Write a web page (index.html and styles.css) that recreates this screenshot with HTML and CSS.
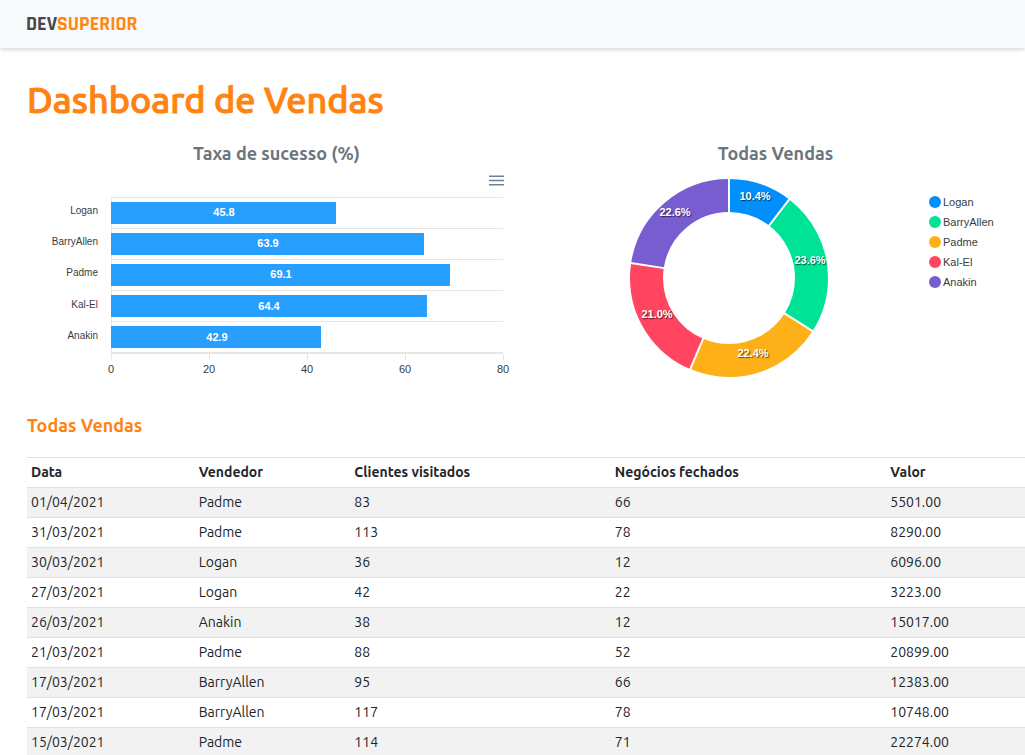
FILE: index.html
```html
<!DOCTYPE html>
<html lang="pt-BR">
<head>
<meta charset="utf-8">
<meta name="viewport" content="width=device-width, initial-scale=1">
<title>Dashboard de Vendas</title>
<link rel="stylesheet" href="styles.css">
</head>
<body>
<header class="navbar">
  <a class="brand" href="#">DEV<span class="brand-accent">SUPERIOR</span></a>
</header>
<main class="container">
  <h1 class="page-title">Dashboard de Vendas</h1>
  <div class="charts">
    <section class="chart">
      <h2 class="chart-title">Taxa de sucesso (%)</h2>
      <div class="toolbar">
        <button class="menu-button" type="button" aria-label="Menu">
          <svg class="menu-icon" viewBox="0 0 15 11" aria-hidden="true"><path d="M0 1.2h15M0 5.5h15M0 9.8h15"/></svg>
        </button>
      </div>
      <svg class="bar-chart" viewBox="0 0 499 194" role="img" aria-label="Taxa de sucesso">
        <g class="grid">
          <path d="M84 10.5h392M84 41.5h392M84 72.5h392M84 103.5h392M84 134.5h392"/>
          <path d="M84.5 10v162M182.5 167v6M280.5 167v6M378.5 167v6M476.5 167v6"/>
          <path class="axis" d="M84 166h392"/>
        </g>
        <g class="bars">
          <rect x="84" y="15" width="225" height="22"/>
          <rect x="84" y="46" width="313" height="22"/>
          <rect x="84" y="77" width="339" height="22"/>
          <rect x="84" y="108" width="316" height="22"/>
          <rect x="84" y="139" width="210" height="22"/>
        </g>
        <g class="bar-values">
          <text x="197" y="29">45.8</text>
          <text x="241" y="60">63.9</text>
          <text x="254" y="91">69.1</text>
          <text x="242" y="123">64.4</text>
          <text x="190" y="154">42.9</text>
        </g>
        <g class="bar-names">
          <text x="71" y="27">Logan</text>
          <text x="71" y="58">BarryAllen</text>
          <text x="71" y="89">Padme</text>
          <text x="71" y="121">Kal-El</text>
          <text x="71" y="152">Anakin</text>
        </g>
        <g class="ticks">
          <text x="84" y="186">0</text>
          <text x="182" y="186">20</text>
          <text x="280" y="186">40</text>
          <text x="378" y="186">60</text>
          <text x="476" y="186">80</text>
        </g>
      </svg>
    </section>
    <section class="chart">
      <h2 class="chart-title">Todas Vendas</h2>
      <div class="donut-row">
        <svg class="donut" viewBox="0 0 403 214" role="img" aria-label="Todas Vendas por vendedor">
          <g class="slices" transform="translate(203 111) rotate(-90)">
            <circle class="blue" r="82.5" pathLength="1000" stroke-dasharray="104 896"/>
            <circle class="green" r="82.5" pathLength="1000" stroke-dasharray="236 764" stroke-dashoffset="-104"/>
            <circle class="yellow" r="82.5" pathLength="1000" stroke-dasharray="224 776" stroke-dashoffset="-340"/>
            <circle class="red" r="82.5" pathLength="1000" stroke-dasharray="210 790" stroke-dashoffset="-564"/>
            <circle class="purple" r="82.5" pathLength="1000" stroke-dasharray="226 774" stroke-dashoffset="-774"/>
          </g>
          <g class="dividers" transform="translate(203 111)">
            <path d="M0-64v-37"/>
            <path d="M0-64v-37" transform="rotate(37.44)"/>
            <path d="M0-64v-37" transform="rotate(122.4)"/>
            <path d="M0-64v-37" transform="rotate(203.04)"/>
            <path d="M0-64v-37" transform="rotate(278.64)"/>
          </g>
          <g class="slice-values">
            <text x="229" y="33">10.4%</text>
            <text x="284" y="97">23.6%</text>
            <text x="227" y="190">22.4%</text>
            <text x="131" y="151">21.0%</text>
            <text x="149" y="49">22.6%</text>
          </g>
        </svg>
        <ul class="legend">
          <li class="legend-item"><span class="dot dot-blue"></span>Logan</li>
          <li class="legend-item"><span class="dot dot-green"></span>BarryAllen</li>
          <li class="legend-item"><span class="dot dot-yellow"></span>Padme</li>
          <li class="legend-item"><span class="dot dot-red"></span>Kal-El</li>
          <li class="legend-item"><span class="dot dot-purple"></span>Anakin</li>
        </ul>
      </div>
    </section>
  </div>
  <h2 class="table-title">Todas Vendas</h2>
  <table class="sales">
    <colgroup><col class="col-date"><col class="col-seller"><col class="col-visited"><col class="col-deals"><col></colgroup>
    <thead>
      <tr><th scope="col">Data</th><th scope="col">Vendedor</th><th scope="col">Clientes visitados</th><th scope="col">Negócios fechados</th><th scope="col">Valor</th></tr>
    </thead>
    <tbody>
      <tr><td>01/04/2021</td><td>Padme</td><td>83</td><td>66</td><td>5501.00</td></tr>
      <tr><td>31/03/2021</td><td>Padme</td><td>113</td><td>78</td><td>8290.00</td></tr>
      <tr><td>30/03/2021</td><td>Logan</td><td>36</td><td>12</td><td>6096.00</td></tr>
      <tr><td>27/03/2021</td><td>Logan</td><td>42</td><td>22</td><td>3223.00</td></tr>
      <tr><td>26/03/2021</td><td>Anakin</td><td>38</td><td>12</td><td>15017.00</td></tr>
      <tr><td>21/03/2021</td><td>Padme</td><td>88</td><td>52</td><td>20899.00</td></tr>
      <tr><td>17/03/2021</td><td>BarryAllen</td><td>95</td><td>66</td><td>12383.00</td></tr>
      <tr><td>17/03/2021</td><td>BarryAllen</td><td>117</td><td>78</td><td>10748.00</td></tr>
      <tr><td>15/03/2021</td><td>Padme</td><td>114</td><td>71</td><td>22274.00</td></tr>
    </tbody>
  </table>
</main>
</body>
</html>
```

FILE: styles.css
```css
* {
  box-sizing: border-box;
}

body {
  margin: 0;
  background: #fff;
  color: #212529;
  font-family: Ubuntu, "Noto Sans", sans-serif;
  font-size: 14px;
}

.navbar {
  display: flex;
  align-items: center;
  height: 48px;
  padding: 0 26px;
  background: #f8f9fa;
  box-shadow: 0 2px 4px rgba(0, 0, 0, 0.15);
}

.brand {
  color: #46484c;
  font-family: Rajdhani, Roboto, sans-serif;
  font-size: 20px;
  font-weight: 700;
  line-height: 24px;
  text-decoration: none;
}

.brand-accent {
  color: #ff8812;
}

.container {
  padding: 28px 0 0 27px;
}

.page-title {
  margin: 0 0 17px;
  color: #ff8312;
  font-size: 36px;
  font-weight: 500;
  line-height: 48px;
  -webkit-text-stroke: 1px currentColor;
}

.charts {
  display: grid;
  grid-template-columns: 1fr 1fr;
}

.chart-title {
  margin: 0;
  color: #6c757d;
  font-size: 18px;
  font-weight: 700;
  line-height: 24px;
  text-align: center;
}

.toolbar {
  display: flex;
  justify-content: flex-end;
  padding: 8px 22px 0 0;
}

.menu-button {
  display: flex;
  align-items: center;
  height: 14px;
  padding: 0;
  border: 0;
  background: none;
  cursor: pointer;
}

.menu-icon {
  width: 15px;
  height: 11px;
  stroke: #6e8192;
  stroke-width: 1.4;
}

.bar-chart {
  display: block;
  width: 100%;
  font-family: "Liberation Sans", sans-serif;
}

.grid {
  fill: none;
  stroke: #e6e6e6;
}

.axis {
  stroke-width: 2;
}

.bars {
  fill: #279fff;
}

.bar-values {
  fill: #fff;
  font-size: 11px;
  font-weight: 700;
  text-anchor: middle;
}

.bar-names {
  fill: #373d3f;
  font-size: 10px;
  text-anchor: end;
}

.ticks {
  fill: #373d3f;
  font-size: 11px;
  text-anchor: middle;
}

.donut-row {
  display: flex;
  align-items: flex-start;
  padding-top: 2px;
  font-family: "Liberation Sans", sans-serif;
}

.donut {
  flex: 403 1 0;
  min-width: 0;
}

.slices {
  fill: none;
  stroke-width: 33;
}

.blue {
  stroke: #008ffb;
}

.green {
  stroke: #00e396;
}

.yellow {
  stroke: #feb019;
}

.red {
  stroke: #ff4560;
}

.purple {
  stroke: #775dd0;
}

.dividers {
  stroke: #fff;
  stroke-width: 2;
}

.slice-values {
  fill: #fff;
  font-size: 11px;
  font-weight: 700;
  text-anchor: middle;
  text-shadow: 1px 1px 1px rgba(0, 0, 0, 0.6);
}

.legend {
  flex: 96 0 0;
  margin: 0;
  padding: 25px 0 0;
  color: #373d3f;
  font-size: 11px;
  line-height: 20px;
  list-style: none;
}

.legend-item {
  display: flex;
  align-items: center;
  gap: 2px;
}

.dot {
  width: 12px;
  height: 12px;
  border-radius: 50%;
}

.dot-blue {
  background: #008ffb;
}

.dot-green {
  background: #00e396;
}

.dot-yellow {
  background: #feb019;
}

.dot-red {
  background: #ff4560;
}

.dot-purple {
  background: #775dd0;
}

.table-title {
  margin: 32px 0 20px;
  color: #ff8312;
  font-size: 18px;
  font-weight: 700;
  line-height: 24px;
}

.sales {
  width: 100%;
  border-collapse: collapse;
  table-layout: fixed;
}

.col-date {
  width: 16.8%;
}

.col-seller {
  width: 15.6%;
}

.col-visited {
  width: 26.1%;
}

.col-deals {
  width: 27.6%;
}

.sales th,
.sales td {
  height: 30px;
  padding: 0 4px 2px;
  border-top: 1px solid #dee2e6;
  line-height: 20px;
  text-align: left;
}

.sales tbody tr:nth-child(odd) {
  background: #f2f2f2;
}
```
